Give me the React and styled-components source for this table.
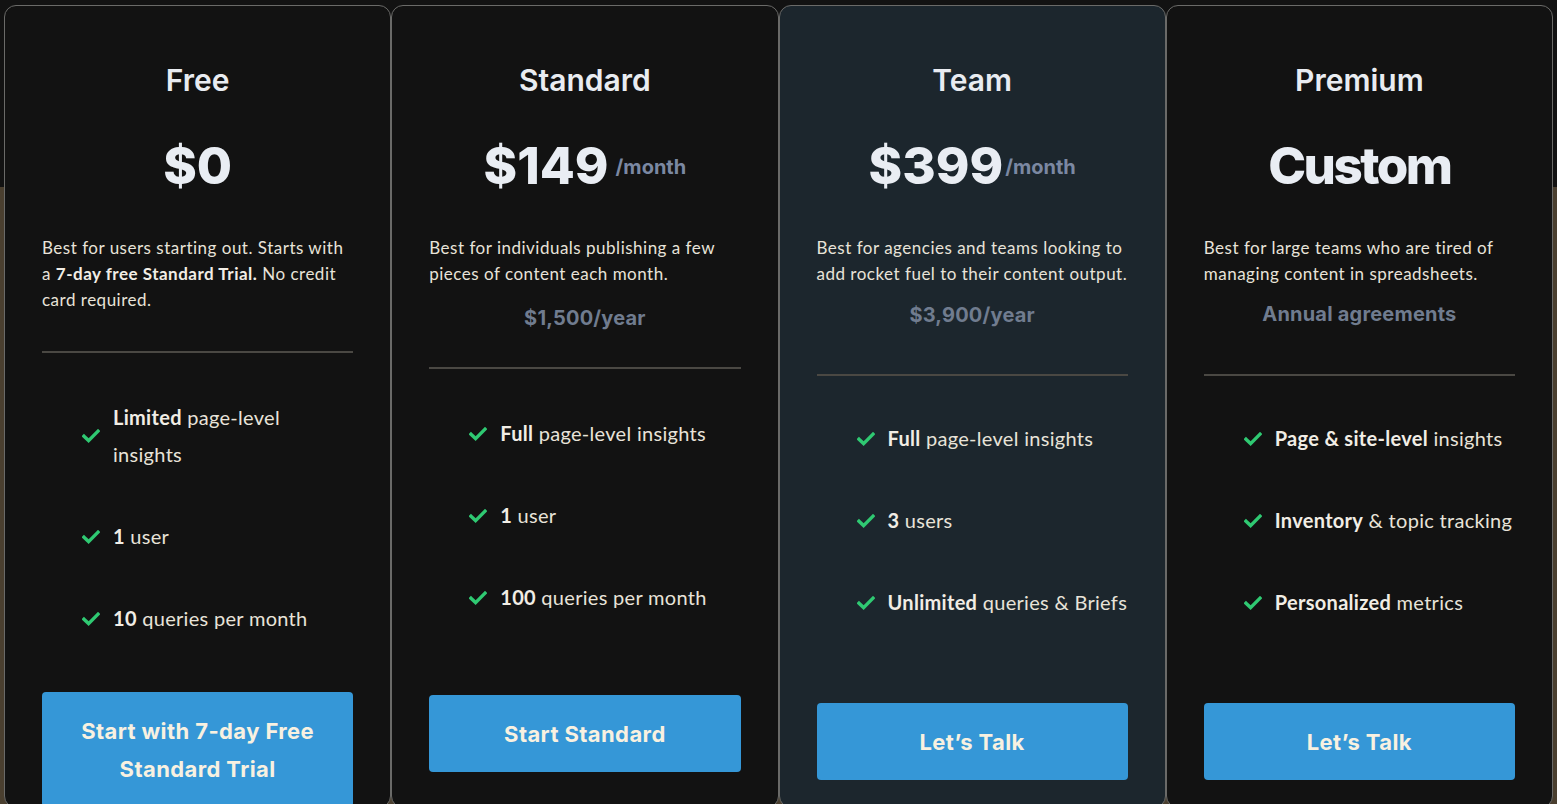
import React from "react";
import styled, { createGlobalStyle } from "styled-components";

const GlobalStyle = createGlobalStyle`
  html, body {
    margin: 0;
    padding: 0;
    background: #121212;
    overflow: hidden;
  }
  * { box-sizing: border-box; }
`;

const plans = [
  {
    name: "Free",
    price: "$0",
    desc: (
      <>
        Best for users starting out. Starts with a <b>7-day free Standard Trial.</b> No credit card required.
      </>
    ),
    features: [
      [<b key="b">Limited</b>, " page-level", <br key="br" />, "insights"],
      [<b key="b">1</b>, " user"],
      [<b key="b">10</b>, " queries per month"],
    ],
    cta: "Start with 7-day Free Standard Trial",
    gaps: { divider: 38, list: 46, button: 55 },
  },
  {
    name: "Standard",
    price: "$149",
    period: "/month",
    periodGap: 7,
    desc: "Best for individuals publishing a few pieces of content each month.",
    note: "$1,500/year",
    features: [
      [<b key="b">Full</b>, " page-level insights"],
      [<b key="b">1</b>, " user"],
      [<b key="b">100</b>, " queries per month"],
    ],
    cta: "Start Standard",
    gaps: { note: 18, divider: 36, list: 46, button: 79 },
  },
  {
    name: "Team",
    price: "$399",
    period: "/month",
    periodGap: 2,
    highlight: true,
    desc: "Best for agencies and teams looking to add rocket fuel to their content output.",
    note: "$3,900/year",
    features: [
      [<b key="b">Full</b>, " page-level insights"],
      [<b key="b">3</b>, " users"],
      [<b key="b">Unlimited</b>, " queries & Briefs"],
    ],
    cta: "Let’s Talk",
    gaps: { note: 15, divider: 46, list: 44, button: 82 },
  },
  {
    name: "Premium",
    price: "Custom",
    tight: true,
    desc: "Best for large teams who are tired of managing content in spreadsheets.",
    note: "Annual agreements",
    features: [
      [<b key="b">Page &amp; site-level</b>, " insights"],
      [<b key="b">Inventory</b>, " & topic tracking"],
      [<b key="b">Personalized</b>, " metrics"],
    ],
    cta: "Let’s Talk",
    gaps: { note: 14, divider: 47, list: 44, button: 82 },
  },
];

function Check() {
  return (
    <CheckIcon viewBox="0 0 18 14" width="18" height="14">
      <path d="M2 7.2 L6.6 11.6 L16 2.2" fill="none" stroke="#2fc972" strokeWidth="3.4" strokeLinecap="square" />
    </CheckIcon>
  );
}

export default function App() {
  return (
    <>
      <GlobalStyle />
      <Page>
        {plans.map((p) => (
          <Card key={p.name} $highlight={p.highlight}>
            <Title>{p.name}</Title>
            <PriceRow>
              <Price $tight={p.tight}>{p.price}</Price>
              {p.period && <Period $gap={p.periodGap}>{p.period}</Period>}
            </PriceRow>
            <Desc>{p.desc}</Desc>
            {p.note && <Note $gap={p.gaps.note}>{p.note}</Note>}
            <Divider $gap={p.gaps.divider} />
            <Features $gap={p.gaps.list}>
              {p.features.map((f, i) => (
                <Feature key={i}>
                  <Check />
                  <span>{f}</span>
                </Feature>
              ))}
            </Features>
            <Button $gap={p.gaps.button}>{p.cta}</Button>
          </Card>
        ))}
      </Page>
    </>
  );
}

const Page = styled.div`
  display: grid;
  grid-template-columns: repeat(4, minmax(0, 1fr));
  padding: 5px 4px 0;
  height: 830px;
  background: linear-gradient(to bottom, #121212 187px, #4a3f2f 187px);
`;

const Card = styled.div`
  display: flex;
  flex-direction: column;
  align-items: center;
  min-width: 0;
  height: 803px;
  padding: 57px 37px 0;
  border: 1px solid #6a6a68;
  border-radius: 12px;
  background: ${(p) => (p.$highlight ? "#1c262d" : "#121212")};

  & > * {
    flex-shrink: 0;
  }
`;

const Title = styled.h2`
  margin: 0;
  font-family: Inter, "Noto Sans", sans-serif;
  font-weight: 600;
  font-size: 30px;
  line-height: 34px;
  color: #e9ecf1;
`;

const PriceRow = styled.div`
  display: flex;
  align-items: center;
  justify-content: center;
  margin-top: 39px;
  height: 60px;
`;

const Price = styled.span`
  font-family: Inter, "Noto Sans", sans-serif;
  font-weight: 800;
  font-size: 51px;
  line-height: 60px;
  letter-spacing: ${(p) => (p.$tight ? "-2.5px" : "0")};
  color: #e9edf3;
`;

const Period = styled.span`
  margin-left: ${(p) => p.$gap}px;
  padding-top: 2px;
  font-family: Inter, "Noto Sans", sans-serif;
  font-weight: 700;
  font-size: 20px;
  color: #7b88a2;
`;

const Desc = styled.p`
  align-self: stretch;
  margin: 39px 0 0;
  font-family: Lato, "Noto Sans", sans-serif;
  font-size: 17px;
  letter-spacing: 0.5px;
  line-height: 26px;
  color: #e8e3d9;

  b {
    font-weight: 700;
    color: #f1ede5;
  }
`;

const Note = styled.div`
  margin-top: ${(p) => p.$gap}px;
  font-family: Inter, "Noto Sans", sans-serif;
  font-weight: 700;
  font-size: 20px;
  letter-spacing: 0.2px;
  line-height: 26px;
  color: #707c8f;
`;

const Divider = styled.hr`
  align-self: stretch;
  margin: ${(p) => p.$gap}px 0 0;
  border: none;
  height: 2px;
  background: #4a4843;
`;

const Features = styled.ul`
  align-self: stretch;
  list-style: none;
  margin: ${(p) => p.$gap}px 0 0;
  padding: 0 0 0 40px;
  display: flex;
  flex-direction: column;
  gap: 45px;
`;

const Feature = styled.li`
  display: flex;
  align-items: center;
  gap: 13px;
  font-family: Lato, "Noto Sans", sans-serif;
  font-size: 20px;
  letter-spacing: 0.3px;
  line-height: 37px;
  white-space: nowrap;
  color: #e8e3d9;

  b {
    font-weight: 700;
    color: #f1ede5;
  }
`;

const CheckIcon = styled.svg`
  flex-shrink: 0;
  display: block;
`;

const Button = styled.button`
  align-self: stretch;
  margin-top: ${(p) => p.$gap}px;
  padding: 20px 16px 19px;
  border: none;
  border-radius: 4px;
  background: #3597d7;
  font-family: Inter, "Noto Sans", sans-serif;
  font-weight: 700;
  font-size: 22px;
  letter-spacing: 0.4px;
  line-height: 38px;
  color: #f8f1e1;
  text-align: center;
  cursor: pointer;
`;
